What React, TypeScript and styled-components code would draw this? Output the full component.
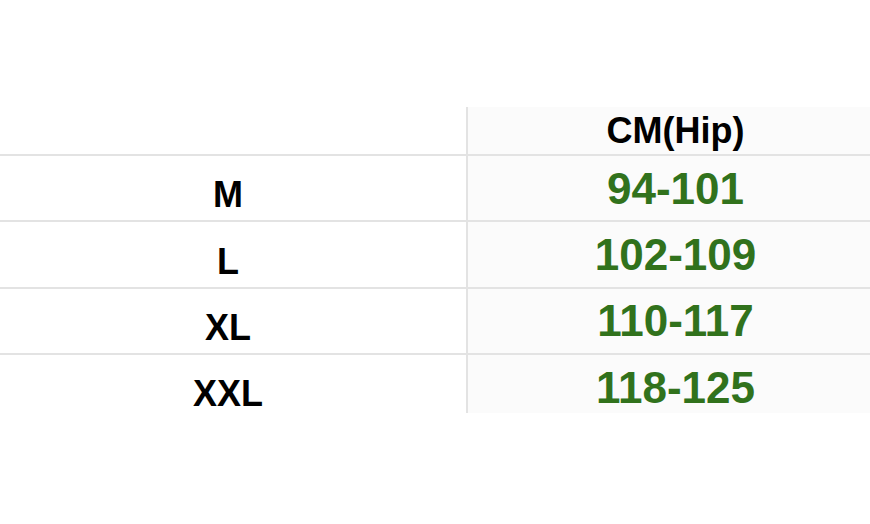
import { Fragment } from "react";
import styled, { createGlobalStyle } from "styled-components";

const GlobalStyle = createGlobalStyle`
  html, body {
    margin: 0;
    padding: 0;
    background: #ffffff;
    overflow: hidden;
  }
  body {
    font-family: "Liberation Sans", Arial, sans-serif;
  }
`;

const Page = styled.div`
  width: 870px;
  height: 524px;
  overflow: hidden;
  padding-top: 107px;
  box-sizing: border-box;
`;

const Clip = styled.div`
  margin-left: -10px;
  width: 893px;
  height: 306px;
  overflow: hidden;
`;

const Grid = styled.div`
  display: grid;
  grid-template-columns: 478px 415px;
`;

const Cell = styled.div<{ $side: "size" | "value"; $head?: boolean }>`
  height: ${(p) => (p.$head ? "47px" : "64.4px")};
  border-bottom: 2px solid #e3e3e3;
  border-right: ${(p) => (p.$side === "size" ? "2px solid #e3e3e3" : "none")};
  background: ${(p) => (p.$side === "value" ? "#fbfbfb" : "#ffffff")};
  display: flex;
  align-items: center;
  justify-content: center;
  font-weight: bold;
  box-sizing: content-box;
`;

const SizeLabel = styled.span`
  font-size: 36px;
  color: #000;
  padding-top: 14px;
`;

const HeadLabel = styled.span`
  font-size: 36px;
  color: #000;
  padding-top: 0;
`;

const Value = styled.span`
  font-size: 44px;
  color: #31721c;
  padding-top: 1px;
`;

const rows = [
  ["M", "94-101"],
  ["L", "102-109"],
  ["XL", "110-117"],
  ["XXL", "118-125"],
];

export default function App() {
  return (
    <Page>
      <GlobalStyle />
      <Clip>
        <Grid>
          <Cell $side="size" $head />
          <Cell $side="value" $head>
            <HeadLabel>CM(Hip)</HeadLabel>
          </Cell>
          {rows.map(([size, cm]) => (
            <Fragment key={size}>
              <Cell $side="size">
                <SizeLabel>{size}</SizeLabel>
              </Cell>
              <Cell $side="value">
                <Value>{cm}</Value>
              </Cell>
            </Fragment>
          ))}
        </Grid>
      </Clip>
    </Page>
  );
}
